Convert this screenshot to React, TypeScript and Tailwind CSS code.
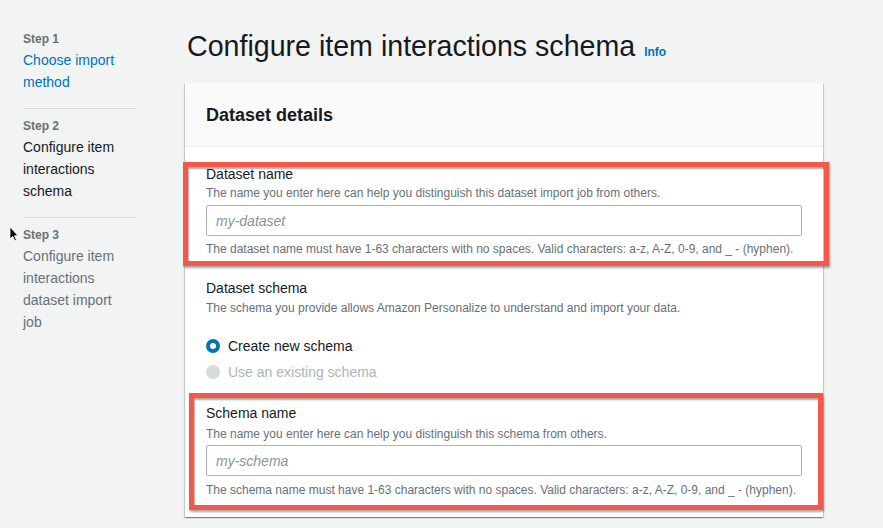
import React from "react";

const FONT = { fontFamily: '"Liberation Sans", Arial, sans-serif' };

function Step({ n, lines, tone }: { n: number; lines: string[]; tone: "link" | "current" | "muted" }) {
  const color =
    tone === "link" ? "text-[#0073bb]" : tone === "current" ? "text-[#16191f]" : "text-[#687078]";
  return (
    <div>
      <div className="text-[12px] leading-[16px] font-bold text-[#687078]">Step {n}</div>
      <div className={`text-[14px] leading-[22px] mt-[2px] ${color}`}>
        {lines.map(l => (
          <div key={l}>{l}</div>
        ))}
      </div>
    </div>
  );
}

function Highlight({ className }: { className: string }) {
  // red annotation frame drawn over the form
  return (
    <div
      className={`pointer-events-none absolute border-[5px] border-[#f4584a] shadow-[1px_2px_2px_rgba(0,0,0,0.35),inset_1px_2px_2px_rgba(0,0,0,0.35)] ${className}`}
    />
  );
}

function TextField({ placeholder }: { placeholder: string }) {
  return (
    <input
      readOnly
      placeholder={placeholder}
      className="block w-full h-[31px] rounded-[2px] border border-[#aab7b8] bg-white px-[9px] text-[14px] outline-none placeholder:italic placeholder:text-[#879596]"
      style={FONT}
    />
  );
}

function Radio({ label, checked, disabled }: { label: string; checked?: boolean; disabled?: boolean }) {
  return (
    <div className="flex h-[26px] items-center gap-[8px]">
      {checked ? (
        <span className="h-[14px] w-[14px] rounded-full border-[4px] border-[#0073bb] bg-white" />
      ) : (
        <span className="h-[14px] w-[14px] rounded-full bg-[#d5dbdb]" />
      )}
      <span className={`text-[14px] leading-[20px] ${disabled ? "text-[#aab7b8]" : "text-[#16191f]"}`}>
        {label}
      </span>
    </div>
  );
}

function Cursor() {
  return (
    <svg width="10" height="16" viewBox="0 0 10 16" className="absolute left-[9px] top-[226px]">
      <path d="M1 1 L1 13 L3.8 10.4 L5.8 14.8 L7.4 14.1 L5.5 9.8 L9 9.8 Z" fill="#000" stroke="#fff" strokeWidth="0.8" strokeLinejoin="round" />
    </svg>
  );
}

export default function App() {
  return (
    <div className="relative flex h-[528px] w-[883px] overflow-hidden bg-[#f2f3f3] text-[#16191f]" style={FONT}>
      <Cursor />

      {/* Wizard steps */}
      <aside className="w-[185px] shrink-0 pl-[23px] pt-[31px]">
        <div className="w-[113px]">
          <Step n={1} lines={["Choose import", "method"]} tone="link" />
          <div className="mt-[15px] mb-[9px] h-px bg-[#d5dbdb]" />
          <Step n={2} lines={["Configure item", "interactions", "schema"]} tone="current" />
          <div className="mt-[15px] mb-[9px] h-px bg-[#d5dbdb]" />
          <Step n={3} lines={["Configure item", "interactions", "dataset import", "job"]} tone="muted" />
        </div>
      </aside>

      <main className="flex-1 pr-[60px] pt-[28px]">
        <div className="flex items-baseline gap-[9px] pl-[2px]">
          <h1 className="text-[28.6px] leading-[36px] font-normal text-[#16191f]">Configure item interactions schema</h1>
          <span className="text-[12px] font-bold text-[#0073bb]">Info</span>
        </div>

        <section className="mt-[19px] bg-white shadow-[0_1px_1px_0_rgba(0,28,36,0.3),1px_1px_1px_0_rgba(0,28,36,0.15),-1px_1px_1px_0_rgba(0,28,36,0.15)]">
          <header className="flex h-[64px] items-center border-b border-[#eaeded] bg-[#fafafa] px-[21px]">
            <h2 className="text-[18px] font-bold leading-[22px]">Dataset details</h2>
          </header>

          <div className="relative px-[21px] pt-[17px]">
            <Highlight className="left-[-2px] right-[-6px] top-[15px] h-[104px]" />
            <div className="text-[14px] leading-[20px]">Dataset name</div>
            <div className="mt-px text-[12px] leading-[16px] text-[#687078]">
              The name you enter here can help you distinguish this dataset import job from others.
            </div>
            <div className="mt-[4px]">
              <TextField placeholder="my-dataset" />
            </div>
            <div className="mt-[5px] text-[12px] leading-[16px] text-[#687078]">
              The dataset name must have 1-63 characters with no spaces. Valid characters: a-z, A-Z, 0-9, and _ - (hyphen).
            </div>
          </div>

          <div className="px-[21px] pt-[21px]">
            <div className="text-[14px] leading-[20px]">Dataset schema</div>
            <div className="mt-[2px] text-[12px] leading-[16px] text-[#687078]">
              The schema you provide allows Amazon Personalize to understand and import your data.
            </div>
            <div className="mt-[17px]">
              <Radio label="Create new schema" checked />
              <Radio label="Use an existing schema" disabled />
            </div>
          </div>

          <div className="relative px-[21px] pt-[18px] pb-[19px]">
            <Highlight className="left-[4px] right-0 top-[8px] h-[117px]" />
            <div className="text-[14px] leading-[20px]">Schema name</div>
            <div className="mt-[3px] text-[12px] leading-[16px] text-[#687078]">
              The name you enter here can help you distinguish this schema from others.
            </div>
            <div className="mt-[3px]">
              <TextField placeholder="my-schema" />
            </div>
            <div className="mt-[6px] text-[12px] leading-[16px] text-[#687078]">
              The schema name must have 1-63 characters with no spaces. Valid characters: a-z, A-Z, 0-9, and _ - (hyphen).
            </div>
          </div>
        </section>
      </main>
    </div>
  );
}
